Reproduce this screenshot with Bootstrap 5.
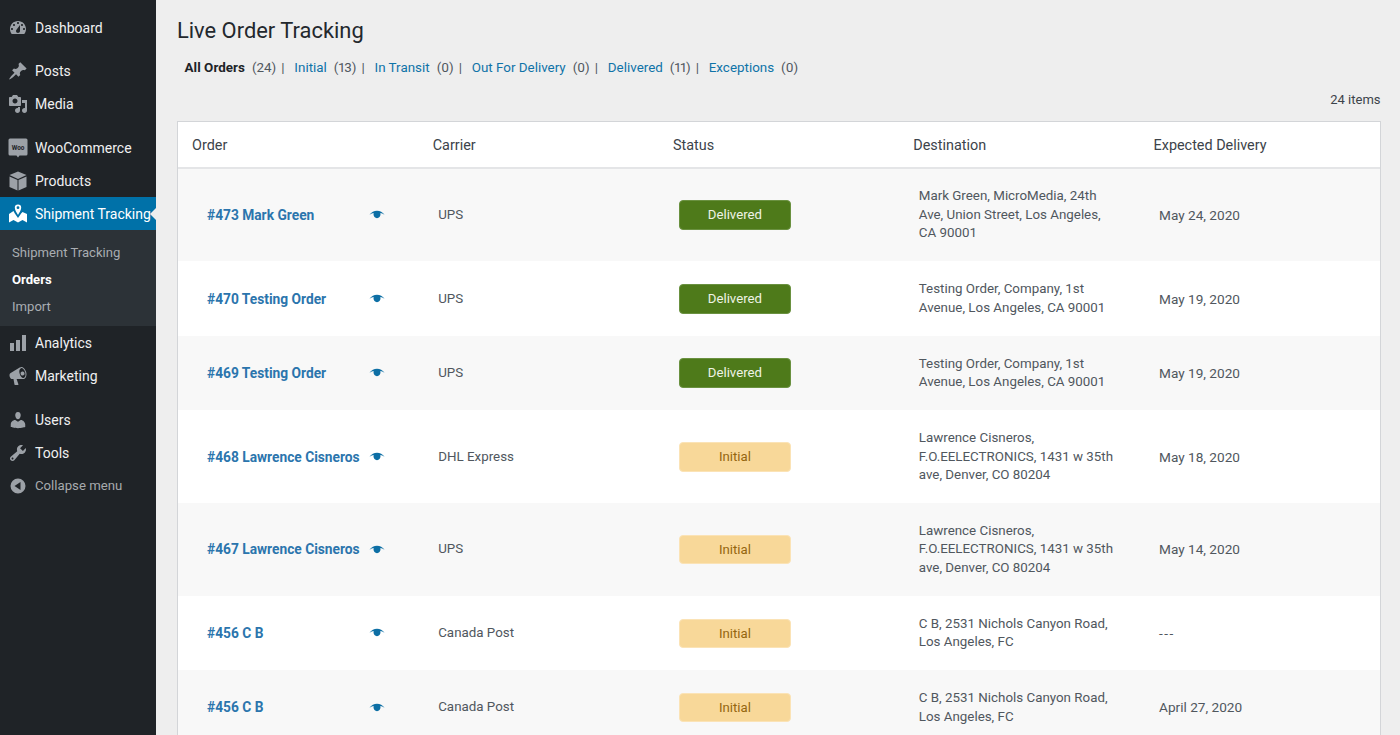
<!doctype html>
<html lang="en"><head><meta charset="utf-8"><title>Live Order Tracking</title>
<link href="https://cdn.jsdelivr.net/npm/bootstrap@5.3.0/dist/css/bootstrap.min.css" rel="stylesheet">
<style>
html,body{height:735px;overflow:hidden}
body{font-family:Roboto,"Liberation Sans",sans-serif;background:#eee;color:#3c434a;font-size:13.5px}
.wp-shell{height:735px}
.wp-side{width:155.5px;flex:none;background:#1f2327;padding-top:11.5px;font-size:14px}
.wp-item{height:33px;color:#f0f0f1;text-decoration:none;padding-left:8px;padding-top:1.5px;gap:7px;position:relative;white-space:nowrap}
.wp-item svg{width:20px;height:20px;fill:#9ca1a7;flex:none;margin-top:-1px}
.wp-gap{height:10.5px}
.wp-gap-a{height:10.2px}
.wp-gap-b{height:10.8px}
.wp-active{background:#0071a8;color:#fff}
.wp-active svg{fill:#fff}
.wp-active::after{content:"";position:absolute;right:0;top:10.5px;border:6px solid transparent;border-right:6px solid #eee;border-left:0}
.wp-sub{background:#2c3237;padding:7.8px 0 7.2px;font-size:13.1px}
.wp-sub a{display:flex;align-items:center;height:27px;padding-left:12px;padding-top:1.5px;color:#a9adb2;text-decoration:none}
.wp-sub a.wp-cur{color:#fff;font-weight:700}
.wp-muted{color:#a7aaad;font-size:13.2px}
.wp-main{padding:0 19.5px 0 21.5px;min-width:0}
.wp-title{font-size:21.9px;font-weight:400;color:#23282d;margin:0;padding-top:17px;line-height:28px}
.wp-filters{margin:13px 0 0 7.5px;font-size:13.4px;line-height:20px;color:#50575e}
.wp-filters a{color:#0f73a8;text-decoration:none}
.wp-filters b{color:#1d2327;font-weight:700;letter-spacing:.05px}
.wp-filters .wp-ct{margin-left:7px;margin-right:5px;font-variant-numeric:proportional-nums}
.wp-filters .wp-sep{margin-right:9.800px}
.wp-count{font-size:13px;line-height:20px;margin-top:12px;color:#3c434a}
.wp-card{margin-top:10.5px;border:1px solid #d3d5d8;background:#fff}
.wp-table{table-layout:fixed;width:100%;margin:0;font-size:13.35px;--bs-table-striped-bg:#f8f8f8;--bs-table-bg:#fff;--bs-table-color:#50575e;--bs-table-striped-color:#50575e}
.wp-table th{font-weight:400;font-size:14.4px;color:#3c434a;padding:4px 14px 0 14.4px;height:46px;vertical-align:middle;border-bottom:2px solid #e4e5e7}
.wp-table th:first-child{padding-left:14px}
.wp-table td{padding:18.9px 19.5px 18.5px 19.900px;line-height:18.5px;vertical-align:middle;border:0}
.wp-table td.wp-order{padding-left:29px;padding-right:34px;font-size:13.75px}
.wp-table td.wp-date{font-size:13.6px}
.wp-dashes{letter-spacing:1.5px}
.wp-ordrow{justify-content:space-between;gap:4px}
.wp-ordrow a{color:#2b75ad;font-weight:700;text-decoration:none;white-space:nowrap}
.wp-ordrow svg{width:16px;height:10px;fill:#0d6fa5;flex:none;margin-right:-1px}
.wp-pill{width:112px;height:29.500px;margin-left:.4px;border-radius:4px;font-size:13.2px;line-height:27.500px;text-align:center;border:1px solid}
.wp-del{background:#4e7a1a;border-color:#6a9140;color:#eef3e6}
.wp-ini{background:#f8d899;border-color:#fbe3b6;color:#94660f}
</style></head>
<body>
<svg width="0" height="0" class="d-none" aria-hidden="true"><defs>
<symbol id="i-dash" viewBox="0 0 20 20"><path fill-rule="evenodd" d="M3.76 16h12.48c1.1-1.37 1.76-3.11 1.76-5 0-4.42-3.58-8-8-8s-8 3.58-8 8c0 1.89.66 3.63 1.76 5zM10 4c.55 0 1 .45 1 1s-.45 1-1 1-1-.45-1-1 .45-1 1-1zM6 6c.55 0 1 .45 1 1s-.45 1-1 1-1-.45-1-1 .45-1 1-1zm8 0c.55 0 1 .45 1 1s-.45 1-1 1-1-.45-1-1 .45-1 1-1zm-5.37 5.55L12 7v6c0 1.1-.9 2-2 2s-2-.9-2-2c0-.57.24-1.08.63-1.45zM4 10c.55 0 1 .45 1 1s-.45 1-1 1-1-.45-1-1 .45-1 1-1zm12 0c.55 0 1 .45 1 1s-.45 1-1 1-1-.45-1-1 .45-1 1-1z"/></symbol>
<symbol id="i-pin" viewBox="0 0 20 20"><path d="M10.44 3.02l1.82-1.82 6.36 6.35-1.83 1.82c-1.05-.68-2.48-.57-3.41.36l-.75.75c-.92.93-1.04 2.35-.35 3.41l-1.83 1.82-2.41-2.41-2.8 2.79c-.42.42-3.38 2.71-3.8 2.29s1.86-3.39 2.28-3.81l2.79-2.79L4.1 9.36l1.83-1.82c1.05.69 2.48.57 3.4-.36l.75-.75c.93-.92 1.05-2.35.36-3.41z"/></symbol>
<symbol id="i-media" viewBox="0 0 20 20"><path fill-rule="evenodd" d="M13 11V4c0-.55-.45-1-1-1h-1.67L9 1H5L3.67 3H2c-.55 0-1 .45-1 1v7c0 .55.45 1 1 1h10c.55 0 1-.45 1-1zM7 4.5c1.38 0 2.5 1.12 2.5 2.5S8.38 9.5 7 9.5 4.5 8.38 4.5 7 5.62 4.5 7 4.5zM14 6h5v10.5c0 1.38-1.12 2.5-2.5 2.5S14 17.88 14 16.5s1.12-2.5 2.5-2.5c.17 0 .34.02.5.05V9h-3V6zm-4 8.05V13h2v3.5c0 1.38-1.12 2.5-2.5 2.5S7 17.88 7 16.5 8.12 14 9.5 14c.17 0 .34.02.5.05z"/></symbol>
<symbol id="i-woo" viewBox="0 0 20 20"><path d="M2 .5h16a1.500 1.500 0 0 1 1.500 1.500v14a1.500 1.500 0 0 1-1.500 1.500h-6.500L10 19.500 8.500 17.500H2A1.500 1.500 0 0 1 .5 16V2A1.500 1.500 0 0 1 2 .5z"/><text x="10" y="11.500" font-size="6.400" font-weight="700" text-anchor="middle" fill="#1f2327" font-family="Roboto,sans-serif">Woo</text></symbol>
<symbol id="i-box" viewBox="0 0 20 20"><path d="M10 .5l8.500 3.600L10 8 1.500 4.100zM1.500 5.400l8 3.700V19.500l-8-3.600zM18.500 5.400V15.900l-8 3.600V9.100z"/></symbol>
<symbol id="i-map" viewBox="0 0 20 20"><path fill-rule="evenodd" d="M10 .5a3.200 3.200 0 0 1 3.200 3.200c0 2-2 5.300-3.200 7.300-1.200-2-3.200-5.300-3.200-7.300A3.200 3.200 0 0 1 10 .5zm0 1.800a1.400 1.400 0 1 0 0 2.800 1.400 1.400 0 0 0 0-2.800zM1 10l4.500-3 1.200 2.200L10 14l3.300-4.800L14.500 8l4.500 2v8.500l-4.500-2.500-4.500 2.500-4.500-2.500L1 18.500z"/></symbol>
<symbol id="i-chart" viewBox="0 0 20 20"><path d="M18 18V2h-4v16h4zm-6 0V7H8v11h4zm-6 0v-8H2v8h4z"/></symbol>
<symbol id="i-mega" viewBox="0 0 20 20"><path fill-rule="evenodd" d="M18.150 5.940c.46 1.620.38 3.220-.02 4.480-.42 1.280-1.260 2.180-2.300 2.480-.34.100-.56.100-.8.100H8.600l1.900 5.500c.02.14-.3.500-.48.500H6.950c-.28 0-.44-.2-.48-.5l-1-5.500H4.250c-.5.060-1.080-.18-1.540-.62s-.88-1.080-1.060-1.880c-.24-.8-.2-1.560-.02-2.200.18-.62.58-1.080 1.060-1.300l9-5.400c.3-.2.500-.3.980-.46 1.040-.3 2.240.1 3.220 1 .98.880 1.800 2.240 2.260 3.860zm-2.580 5.980c1.800-.5 2.500-3 1.600-5.700-.8-2.600-2.600-4.400-4.100-4.070-1.700.5-2.200 3-1.400 5.500.8 2.700 2.500 4.700 3.900 4.270zM14 5.600a2 2 0 1 1 1.100 3.900A2 2 0 0 1 14 5.600z"/></symbol>
<symbol id="i-user" viewBox="0 0 20 20"><path d="M10 9.250c-2.270 0-2.730-3.440-2.730-3.440C7 4.020 7.820 2 9.970 2c2.160 0 2.980 2.020 2.710 3.810 0 0-.41 3.440-2.68 3.440zm0 2.570L12.720 10c2.390 0 4.520 2.330 4.520 4.530v2.490s-3.650 1.130-7.240 1.130c-3.650 0-7.240-1.130-7.240-1.130v-2.490c0-2.250 1.940-4.480 4.470-4.480z"/></symbol>
<symbol id="i-tool" viewBox="0 0 20 20"><path fill-rule="evenodd" d="M16.680 9.770c-1.340 1.340-3.300 1.670-4.950.99l-5.410 6.520c-.99.99-2.590.99-3.580 0s-.99-2.59 0-3.570l6.520-5.420c-.68-1.650-.35-3.61.99-4.950 1.280-1.280 3.120-1.620 4.720-1.060l-2.890 2.890 2.820 2.820 2.860-2.870c.53 1.580.18 3.390-1.080 4.650zM3.810 16.210c.4.39 1.040.39 1.430 0 .4-.4.4-1.040 0-1.430-.39-.4-1.030-.4-1.430 0-.39.39-.39 1.030 0 1.430z"/></symbol>
<symbol id="i-coll" viewBox="0 0 20 20"><path fill-rule="evenodd" d="M10 2.500a7.500 7.500 0 1 0 0 15 7.500 7.500 0 0 0 0-15zm2.500 3.500v8L6.500 10z"/></symbol>
<symbol id="i-eye" viewBox="0 0 16 10"><path d="M.5 4.800C2.500 2 5 .8 8 .8s5.500 1.200 7.500 4c-1.500-1-3-1.600-4.300-1.800.2.400.3.800.3 1.300 0 1.900-1.500 3.900-3.500 3.900S4.500 6.200 4.500 4.300c0-.5.100-.9.300-1.300C3.500 3.200 2 3.800.5 4.800z"/></symbol>
</defs></svg>
<div class="d-flex wp-shell">
<nav class="wp-side d-flex flex-column">
<a href="#" class="wp-item d-flex align-items-center"><svg><use href="#i-dash"/></svg>Dashboard</a>
<div class="wp-gap-a"></div>
<a href="#" class="wp-item d-flex align-items-center"><svg><use href="#i-pin"/></svg>Posts</a>
<a href="#" class="wp-item d-flex align-items-center"><svg><use href="#i-media"/></svg>Media</a>
<div class="wp-gap-b"></div>
<a href="#" class="wp-item d-flex align-items-center"><svg><use href="#i-woo"/></svg>WooCommerce</a>
<a href="#" class="wp-item d-flex align-items-center"><svg><use href="#i-box"/></svg>Products</a>
<a href="#" class="wp-item wp-active d-flex align-items-center"><svg><use href="#i-map"/></svg>Shipment Tracking</a>
<div class="wp-sub"><a href="#">Shipment Tracking</a><a href="#" class="wp-cur">Orders</a><a href="#">Import</a></div>
<a href="#" class="wp-item d-flex align-items-center"><svg><use href="#i-chart"/></svg>Analytics</a>
<a href="#" class="wp-item d-flex align-items-center"><svg><use href="#i-mega"/></svg>Marketing</a>
<div class="wp-gap"></div>
<a href="#" class="wp-item d-flex align-items-center"><svg><use href="#i-user"/></svg>Users</a>
<a href="#" class="wp-item d-flex align-items-center"><svg><use href="#i-tool"/></svg>Tools</a>
<a href="#" class="wp-item wp-muted d-flex align-items-center"><svg><use href="#i-coll"/></svg>Collapse menu</a>
</nav>
<main class="wp-main flex-grow-1">
<h1 class="wp-title">Live Order Tracking</h1>
<div class="wp-filters"><b>All Orders</b><span class="wp-ct">(24)</span><span class="wp-sep">|</span><a href="#">Initial</a><span class="wp-ct">(13)</span><span class="wp-sep">|</span><a href="#">In Transit</a><span class="wp-ct">(0)</span><span class="wp-sep">|</span><a href="#">Out For Delivery</a><span class="wp-ct">(0)</span><span class="wp-sep">|</span><a href="#">Delivered</a><span class="wp-ct">(11)</span><span class="wp-sep">|</span><a href="#">Exceptions</a><span class="wp-ct">(0)</span></div>
<div class="wp-count text-end">24 items</div>
<div class="wp-card">
<table class="table table-striped wp-table">
<thead><tr><th>Order</th><th>Carrier</th><th>Status</th><th>Destination</th><th>Expected Delivery</th></tr></thead>
<tbody>
<tr><td class="wp-order"><div class="wp-ordrow d-flex align-items-center"><a href="#">#473 Mark Green</a><svg><use href="#i-eye"/></svg></div></td><td>UPS</td><td><div class="wp-pill wp-del">Delivered</div></td><td>Mark Green, MicroMedia, 24th<br>Ave, Union Street, Los Angeles,<br>CA 90001</td><td class="wp-date">May 24, 2020</td></tr>
<tr><td class="wp-order"><div class="wp-ordrow d-flex align-items-center"><a href="#">#470 Testing Order</a><svg><use href="#i-eye"/></svg></div></td><td>UPS</td><td><div class="wp-pill wp-del">Delivered</div></td><td>Testing Order, Company, 1st Avenue, Los Angeles, CA 90001</td><td class="wp-date">May 19, 2020</td></tr>
<tr><td class="wp-order"><div class="wp-ordrow d-flex align-items-center"><a href="#">#469 Testing Order</a><svg><use href="#i-eye"/></svg></div></td><td>UPS</td><td><div class="wp-pill wp-del">Delivered</div></td><td>Testing Order, Company, 1st Avenue, Los Angeles, CA 90001</td><td class="wp-date">May 19, 2020</td></tr>
<tr><td class="wp-order"><div class="wp-ordrow d-flex align-items-center"><a href="#">#468 Lawrence Cisneros</a><svg><use href="#i-eye"/></svg></div></td><td>DHL Express</td><td><div class="wp-pill wp-ini">Initial</div></td><td>Lawrence Cisneros, F.O.EELECTRONICS, 1431 w 35th ave, Denver, CO 80204</td><td class="wp-date">May 18, 2020</td></tr>
<tr><td class="wp-order"><div class="wp-ordrow d-flex align-items-center"><a href="#">#467 Lawrence Cisneros</a><svg><use href="#i-eye"/></svg></div></td><td>UPS</td><td><div class="wp-pill wp-ini">Initial</div></td><td>Lawrence Cisneros, F.O.EELECTRONICS, 1431 w 35th ave, Denver, CO 80204</td><td class="wp-date">May 14, 2020</td></tr>
<tr><td class="wp-order"><div class="wp-ordrow d-flex align-items-center"><a href="#">#456 C B</a><svg><use href="#i-eye"/></svg></div></td><td>Canada Post</td><td><div class="wp-pill wp-ini">Initial</div></td><td>C B, 2531 Nichols Canyon Road, Los Angeles, FC</td><td class="wp-date"><span class="wp-dashes">---</span></td></tr>
<tr><td class="wp-order"><div class="wp-ordrow d-flex align-items-center"><a href="#">#456 C B</a><svg><use href="#i-eye"/></svg></div></td><td>Canada Post</td><td><div class="wp-pill wp-ini">Initial</div></td><td>C B, 2531 Nichols Canyon Road, Los Angeles, FC</td><td class="wp-date">April 27, 2020</td></tr>
</tbody></table>
</div>
</main>
</div>
<script src="https://cdn.jsdelivr.net/npm/bootstrap@5.3.0/dist/js/bootstrap.bundle.min.js"></script>
</body></html>
